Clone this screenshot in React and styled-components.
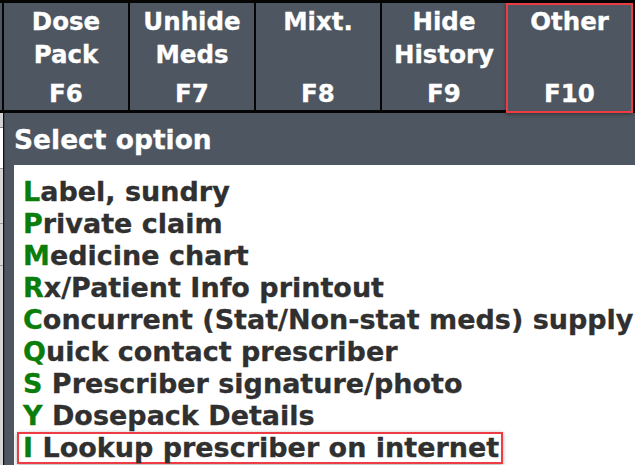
import React from "react";
import styled, { createGlobalStyle } from "styled-components";

const GlobalStyle = createGlobalStyle`
  html, body {
    margin: 0;
    padding: 0;
    width: 635px;
    height: 465px;
    overflow: hidden;
    background: #ffffff;
    font-family: "DejaVu Sans", Verdana, sans-serif;
  }
`;

const Screen = styled.div`
  display: flex;
  flex-direction: column;
  width: 635px;
  height: 465px;
  overflow: hidden;
`;

const KeyBar = styled.div`
  display: flex;
  gap: 2px;
  background: #050505;
  padding: 3px 0;
  height: 113px;
  box-sizing: border-box;
  flex-shrink: 0;
`;

const Stub = styled.div`
  width: 2px;
  background: #4e5761;
`;

const KeyButton = styled.div`
  width: ${({ $active }) => ($active ? "127px" : "124px")};
  flex-shrink: 0;
  box-sizing: border-box;
  background: #4e5761;
  display: flex;
  flex-direction: column;
  align-items: center;
  color: #ffffff;
  font-weight: bold;
  font-size: 24.5px;
  line-height: 33px;
  text-align: center;
  -webkit-text-stroke: 0.3px #ffffff;
  padding-top: ${({ $active }) => ($active ? "0" : "2px")};
  margin-left: ${({ $active }) => ($active ? "-2px" : "0")};
  margin-bottom: ${({ $active }) => ($active ? "-3px" : "0")};
  border: ${({ $active }) => ($active ? "2px solid #ee3c44" : "none")};
  box-shadow: ${({ $active }) =>
    $active ? "0 1px 4px rgba(0, 0, 0, 0.45)" : "none"};
  position: relative;
  z-index: ${({ $active }) => ($active ? 1 : 0)};
`;

const KeyLabel = styled.div`
  height: 66px;
  white-space: pre-line;
`;

const KeyName = styled.div`
  margin-top: 6px;
`;

const Lower = styled.div`
  flex: 1;
  display: flex;
  min-height: 0;
`;

const BackColumn = styled.div`
  width: 3px;
  flex-shrink: 0;
  border-right: 1px solid #111;
  background: linear-gradient(
    #d2d2d2 0 14px,
    #8a8a8a 14px 15px,
    #ffffff 15px 55px,
    #9a9a9a 55px 56px,
    #d6d6d6 56px 110px,
    #9a9a9a 110px 111px,
    #d6d6d6 111px 152px,
    #9a9a9a 152px 153px,
    #d6d6d6 153px
  );
`;

const Panel = styled.div`
  flex: 1;
  display: flex;
  flex-direction: column;
  background: #4e5761;
  border-left: 1px solid #3d444c;
  padding: 11px 0 0 9px;
  min-width: 0;
`;

const PanelTitle = styled.div`
  color: #ffffff;
  font-size: 26.5px;
  font-weight: bold;
  line-height: 32px;
  margin-bottom: 9px;
  -webkit-text-stroke: 0.3px #ffffff;
  white-space: nowrap;
`;

const OptionList = styled.div`
  flex: 1;
  background: #ffffff;
  padding: 11px 0 0 9px;
  display: flex;
  flex-direction: column;
  align-items: flex-start;
`;

const Option = styled.div`
  font-size: 27px;
  font-weight: bold;
  color: #303030;
  -webkit-text-stroke: 0.3px currentColor;
  white-space: nowrap;
  line-height: ${({ $selected }) => ($selected ? "28px" : "32px")};
  border: ${({ $selected }) => ($selected ? "2px solid #ee3c44" : "none")};
  margin-left: ${({ $selected }) => ($selected ? "-6px" : "0")};
  padding: ${({ $selected }) => ($selected ? "0 2px 0 4px" : "0")};
  box-shadow: ${({ $selected }) =>
    $selected ? "0 1px 4px rgba(0, 0, 0, 0.35)" : "none"};
`;

const Hotkey = styled.span`
  color: #0a7d0a;
  -webkit-text-stroke: 0.3px #0a7d0a;
`;

const keys = [
  { label: "Dose\nPack", key: "F6" },
  { label: "Unhide\nMeds", key: "F7" },
  { label: "Mixt.", key: "F8" },
  { label: "Hide\nHistory", key: "F9" },
  { label: "Other", key: "F10", active: true },
];

const options = [
  { key: "L", text: "abel, sundry" },
  { key: "P", text: "rivate claim" },
  { key: "M", text: "edicine chart" },
  { key: "R", text: "x/Patient Info printout" },
  { key: "C", text: "oncurrent (Stat/Non-stat meds) supply" },
  { key: "Q", text: "uick contact prescriber" },
  { key: "S", text: " Prescriber signature/photo" },
  { key: "Y", text: " Dosepack Details" },
  { key: "I", text: " Lookup prescriber on internet", selected: true },
];

const App = () => {
  return (
    <>
      <GlobalStyle />
      <Screen>
        <KeyBar>
          <Stub />
          {keys.map((k) => (
            <KeyButton key={k.key} $active={k.active}>
              <KeyLabel>{k.label}</KeyLabel>
              <KeyName>{k.key}</KeyName>
            </KeyButton>
          ))}
        </KeyBar>
        <Lower>
          <BackColumn />
          <Panel>
            <PanelTitle>Select option</PanelTitle>
            <OptionList>
              {options.map((o) => (
                <Option key={o.key} $selected={o.selected}>
                  <Hotkey>{o.key}</Hotkey>
                  {o.text}
                </Option>
              ))}
            </OptionList>
          </Panel>
        </Lower>
      </Screen>
    </>
  );
};

export default App;
